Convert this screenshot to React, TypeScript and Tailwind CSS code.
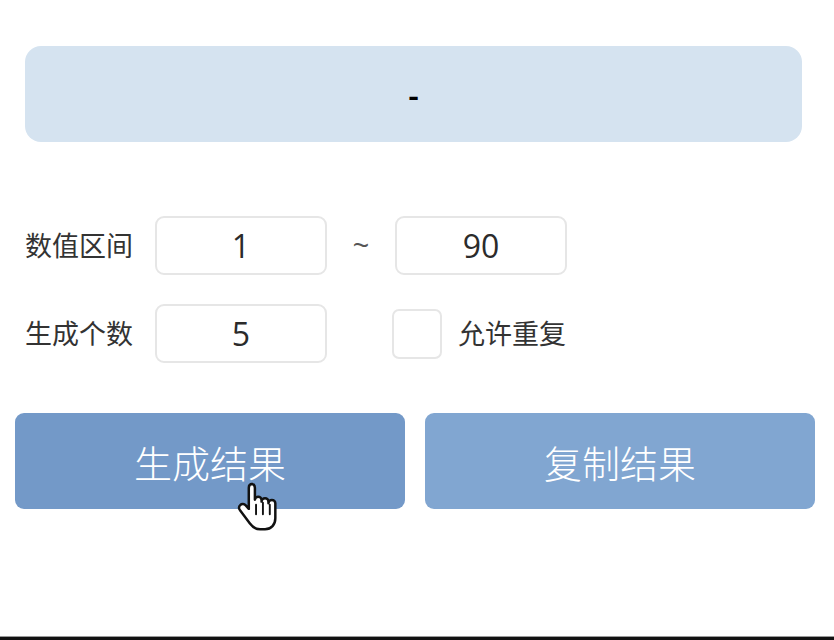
import React from "react";

const cjk = "font-['Microsoft_YaHei','Noto_Sans_CJK_SC',sans-serif]";

function Box({ value }: { value: string }) {
  return (
    <div className="flex h-[59px] w-[172px] items-center justify-center rounded-[9px] border-2 border-[#e6e6e6] bg-white font-['Open_Sans','Noto_Sans_CJK_SC',sans-serif] text-[32px] text-[#2b2b2b]">
      {value}
    </div>
  );
}

function Hand() {
  return (
    <svg
      className="absolute left-[236px] top-[481px]"
      width="42"
      height="55"
      viewBox="0 0 22 28"
    >
      <path
        d="M8.6 1.2c-1.1 0-1.9.8-1.9 1.9V14.2L5.1 12.4c-.8-.9-2.1-1-2.9-.2-.8.7-.8 1.9-.1 2.7l5.2 7c1.4 1.9 3 3 5.3 3h2.6c3.3 0 5.4-2.5 5.4-5.8V11.3c0-1-.8-1.8-1.8-1.8s-1.8.8-1.8 1.8v-.9c0-1-.8-1.8-1.8-1.8s-1.8.8-1.8 1.8v-.8c0-1-.8-1.8-1.8-1.8s-1.6.7-1.7 1.6V3.1c0-1.1-.8-1.9-1.9-1.9z"
        fill="#fff"
        stroke="#111"
        strokeWidth="1.3"
        strokeLinejoin="round"
      />
      <path d="M10.5 12v5M14.1 11v6M17.7 12v5" stroke="#111" strokeWidth="1" strokeLinecap="round" />
    </svg>
  );
}

export default function App() {
  return (
    <div className={`relative flex h-[640px] w-[834px] flex-col bg-white ${cjk}`}>
      <div className="ml-[25px] mt-[46px] flex h-[96px] w-[777px] items-center justify-center rounded-[16px] bg-[#d5e3f0] text-[30px] font-bold text-black">
        -
      </div>

      <div className="mt-[74px] flex items-center pl-[25px]">
        <div className="w-[130px] text-[27px] text-[#333]">数值区间</div>
        <Box value="1" />
        <div className="flex w-[68px] justify-center font-['Liberation_Sans',sans-serif] text-[28px] text-[#555]">~</div>
        <Box value="90" />
      </div>

      <div className="mt-[29px] flex items-center pl-[25px]">
        <div className="w-[130px] text-[27px] text-[#333]">生成个数</div>
        <Box value="5" />
        <div className="ml-[65px] h-[50px] w-[50px] rounded-[7px] border-2 border-[#e6e6e6] bg-white" />
        <div className="ml-[16px] text-[27px] text-[#333]">允许重复</div>
      </div>

      <div className="mt-[50px] flex gap-[20px] pl-[15px]">
        <div className="flex h-[96px] w-[390px] items-center justify-center rounded-[9px] bg-[#7399c8] text-[38px] font-light text-white">
          生成结果
        </div>
        <div className="flex h-[96px] w-[390px] items-center justify-center rounded-[9px] bg-[#81a6d1] text-[38px] font-light text-white">
          复制结果
        </div>
      </div>

      <div className="flex-1" />
      <div className="h-[1px] bg-[#999]" />
      <div className="h-[3px] bg-[#111]" />

      <Hand />
    </div>
  );
}
